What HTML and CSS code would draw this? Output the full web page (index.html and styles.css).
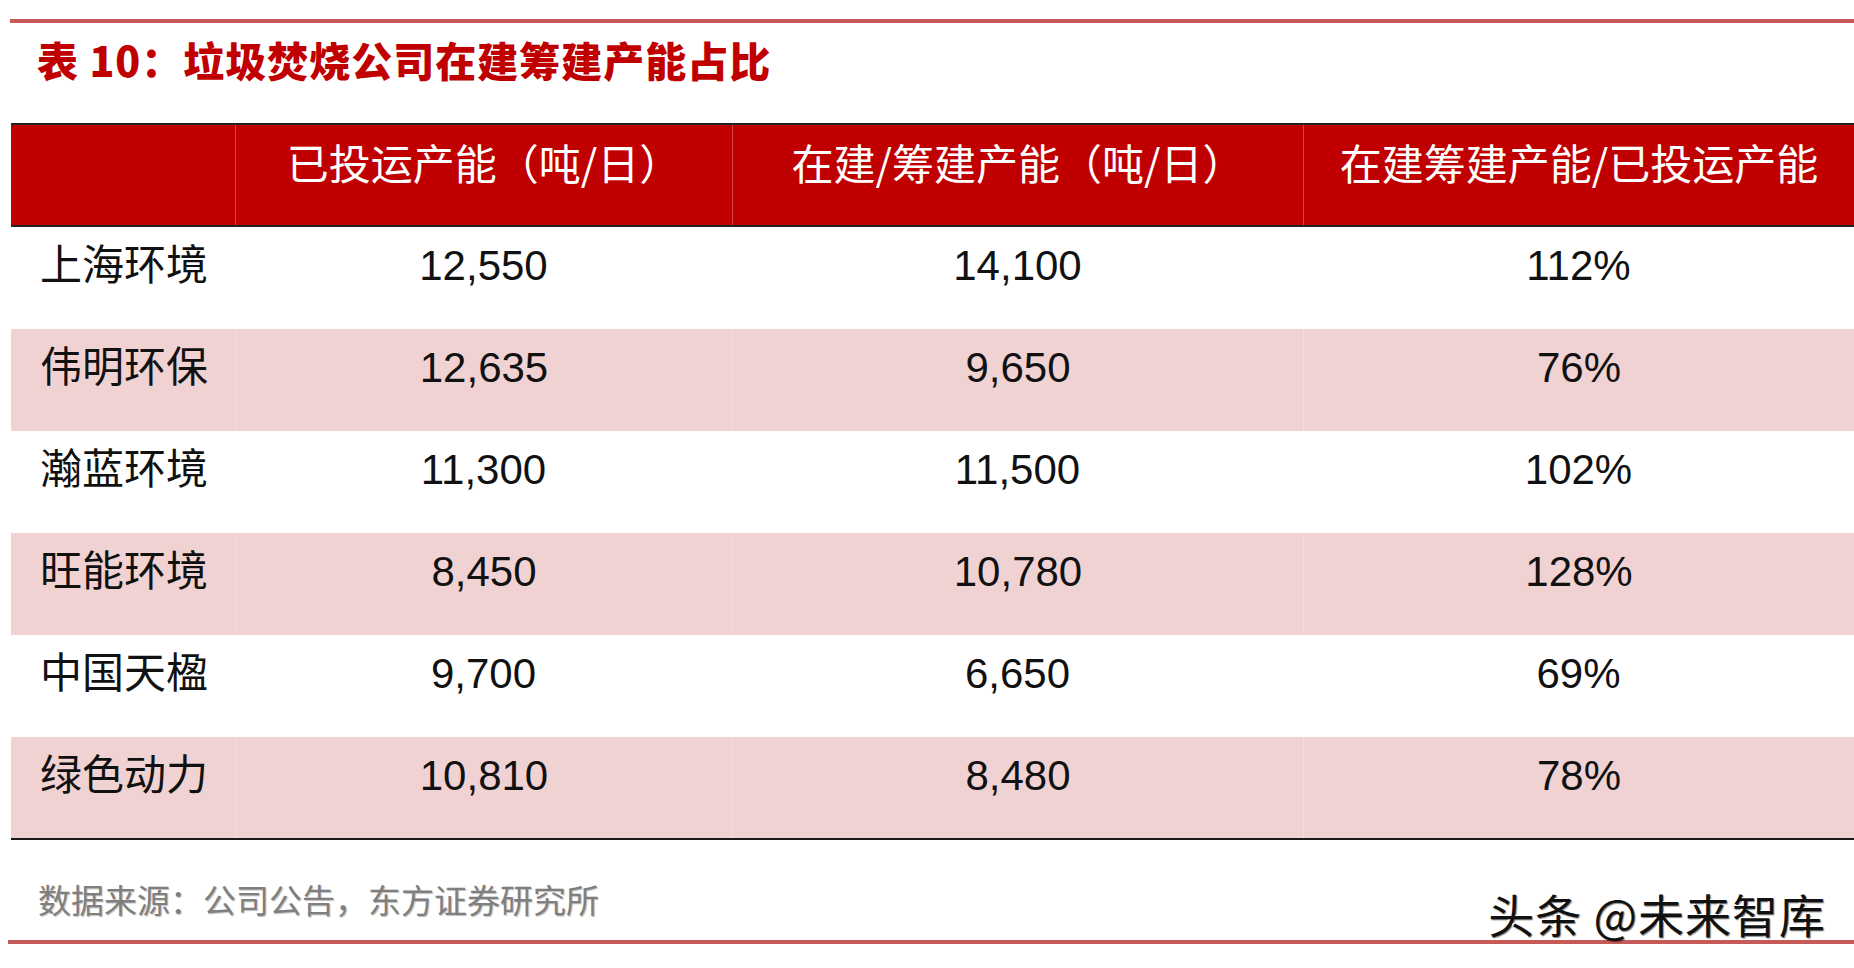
FILE: index.html
```html
<!DOCTYPE html>
<html lang="zh-CN">
<head>
<meta charset="utf-8">
<title>垃圾焚烧公司在建筹建产能占比</title>
<link rel="stylesheet" href="styles.css">
</head>
<body>
<div class="page">
  <div class="rule-top"></div>
  <h1 class="title">表 10：垃圾焚烧公司在建筹建产能占比</h1>
  <div class="table">
    <div class="row head">
      <div class="cell first"></div>
      <div class="cell">已投运产能（吨/日）</div>
      <div class="cell">在建/筹建产能（吨/日）</div>
      <div class="cell">在建筹建产能/已投运产能</div>
    </div>
    <div class="row">
      <div class="cell first">上海环境</div>
      <div class="cell">12,550</div>
      <div class="cell">14,100</div>
      <div class="cell">112%</div>
    </div>
    <div class="row alt">
      <div class="cell first">伟明环保</div>
      <div class="cell">12,635</div>
      <div class="cell">9,650</div>
      <div class="cell">76%</div>
    </div>
    <div class="row">
      <div class="cell first">瀚蓝环境</div>
      <div class="cell">11,300</div>
      <div class="cell">11,500</div>
      <div class="cell">102%</div>
    </div>
    <div class="row alt">
      <div class="cell first">旺能环境</div>
      <div class="cell">8,450</div>
      <div class="cell">10,780</div>
      <div class="cell">128%</div>
    </div>
    <div class="row">
      <div class="cell first">中国天楹</div>
      <div class="cell">9,700</div>
      <div class="cell">6,650</div>
      <div class="cell">69%</div>
    </div>
    <div class="row alt last">
      <div class="cell first">绿色动力</div>
      <div class="cell">10,810</div>
      <div class="cell">8,480</div>
      <div class="cell">78%</div>
    </div>
  </div>
  <div class="footer">
    <div class="source">数据来源：公司公告，东方证券研究所</div>
    <div class="watermark">头条 @未来智库</div>
  </div>
  <div class="rule-bottom"></div>
</div>
</body>
</html>
```

FILE: styles.css
```css
html, body {
  margin: 0;
  padding: 0;
  background: #ffffff;
}

body {
  width: 1854px;
  height: 968px;
  overflow: hidden;
  font-family: "Liberation Sans", "Noto Sans CJK SC", sans-serif;
}

.page {
  display: flex;
  flex-direction: column;
}

.rule-top {
  margin: 19px 0 0 10px;
  height: 4px;
  background: #c55a58;
}

.title {
  margin: 12px 0 0 37px;
  height: 88px;
  font-family: "Noto Sans CJK SC", sans-serif;
  font-weight: 900;
  font-size: 41px;
  line-height: 48px;
  letter-spacing: 1px;
  color: #c00000;
}

.table {
  margin-left: 11px;
  width: 1843px;
  display: flex;
  flex-direction: column;
}

.row {
  display: grid;
  grid-template-columns: 224px 497px 571px 551px;
  height: 102px;
  background: #ffffff;
}

.row.alt {
  background: #f1d2d3;
}

.row.head {
  height: 100px;
  background: #c00000;
  border-top: 2px solid #222222;
  border-bottom: 2px solid #222222;
}

.row.last {
  border-bottom: 2px solid #1a1a1a;
  height: 101px;
}

.cell {
  padding-top: 15px;
  font-size: 42px;
  line-height: 48px;
  color: #111111;
  text-align: center;
  white-space: nowrap;
}

.cell.first {
  text-align: left;
  padding-left: 29px;
}

.head .cell {
  padding-top: 13px;
  color: #ffffff;
  font-family: "Noto Sans CJK SC", sans-serif;
  font-size: 42px;
}

.head .cell + .cell,
.alt .cell + .cell {
  border-left: 1px solid rgba(255, 255, 255, 0.28);
}

.footer {
  position: relative;
  height: 100px;
}

.source {
  padding: 37px 0 0 38px;
  font-family: "Noto Sans CJK SC", sans-serif;
  font-size: 33px;
  line-height: 44px;
  color: #7f7f7f;
  text-shadow: 1px 1px 1px rgba(0, 0, 0, 0.25);
}

.watermark {
  position: absolute;
  right: 28px;
  top: 47px;
  font-family: "Noto Sans CJK SC", sans-serif;
  font-size: 46px;
  line-height: 52px;
  letter-spacing: 1px;
  color: #111111;
  text-shadow: -2px -1px 0 #ffffff, 1px 1px 1px rgba(0, 0, 0, 0.5);
  z-index: 2;
}

.rule-bottom {
  margin-left: 8px;
  height: 4px;
  background: #c55a58;
}
```
